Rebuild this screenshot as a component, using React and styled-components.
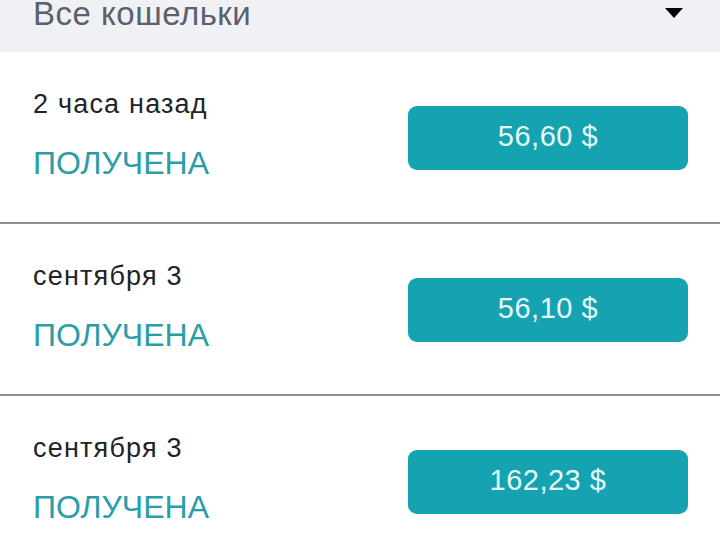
import React from "react";
import styled, { createGlobalStyle } from "styled-components";

const GlobalStyle = createGlobalStyle`
  html, body {
    margin: 0;
    padding: 0;
    background: #ffffff;
    font-family: "Liberation Sans", Arial, sans-serif;
  }
`;

const Page = styled.div`
  width: 720px;
  overflow: hidden;
`;

const Header = styled.div`
  height: 52px;
  background: #f0f1f5;
  display: flex;
  align-items: flex-start;
  justify-content: space-between;
  padding: 0 37px 0 33px;
  box-sizing: border-box;
`;

const HeaderTitle = styled.span`
  font-size: 33px;
  line-height: 28px;
  letter-spacing: 0.5px;
  color: #5b606d;
`;

const Caret = styled.svg`
  width: 18px;
  height: 10px;
  margin-top: 8px;
`;

const Row = styled.div`
  height: 170px;
  display: flex;
  align-items: center;
  justify-content: space-between;
  padding: 0 32px 0 33px;
  border-bottom: 2px solid #8d8f92;
  box-sizing: content-box;
`;

const Info = styled.div`
  display: flex;
  flex-direction: column;
  gap: 24px;
  margin-top: -2px;
`;

const DateText = styled.div`
  font-size: 27px;
  line-height: 30px;
  letter-spacing: 1.2px;
  color: #222326;
`;

const Status = styled.div`
  font-size: 32px;
  line-height: 40px;
  color: #2a9ea7;
`;

const Amount = styled.div`
  width: 280px;
  height: 64px;
  border-radius: 9px;
  background: #16a3b1;
  color: #e6fafb;
  font-size: 29px;
  letter-spacing: 0.5px;
  display: flex;
  align-items: center;
  justify-content: center;
  margin-top: 2px;
  padding-bottom: 3px;
  box-sizing: border-box;
`;

const items = [
  { date: "2 часа назад", amount: "56,60 $" },
  { date: "сентября 3", amount: "56,10 $" },
  { date: "сентября 3", amount: "162,23 $" },
];

export default function App() {
  return (
    <Page>
      <GlobalStyle />
      <Header>
        <HeaderTitle>Все кошельки</HeaderTitle>
        <Caret viewBox="0 0 18 10">
          <path d="M0 0 L18 0 L9 10 Z" fill="#000" />
        </Caret>
      </Header>
      {items.map((it, i) => (
        <Row key={i}>
          <Info>
            <DateText>{it.date}</DateText>
            <Status>ПОЛУЧЕНА</Status>
          </Info>
          <Amount>{it.amount}</Amount>
        </Row>
      ))}
    </Page>
  );
}
